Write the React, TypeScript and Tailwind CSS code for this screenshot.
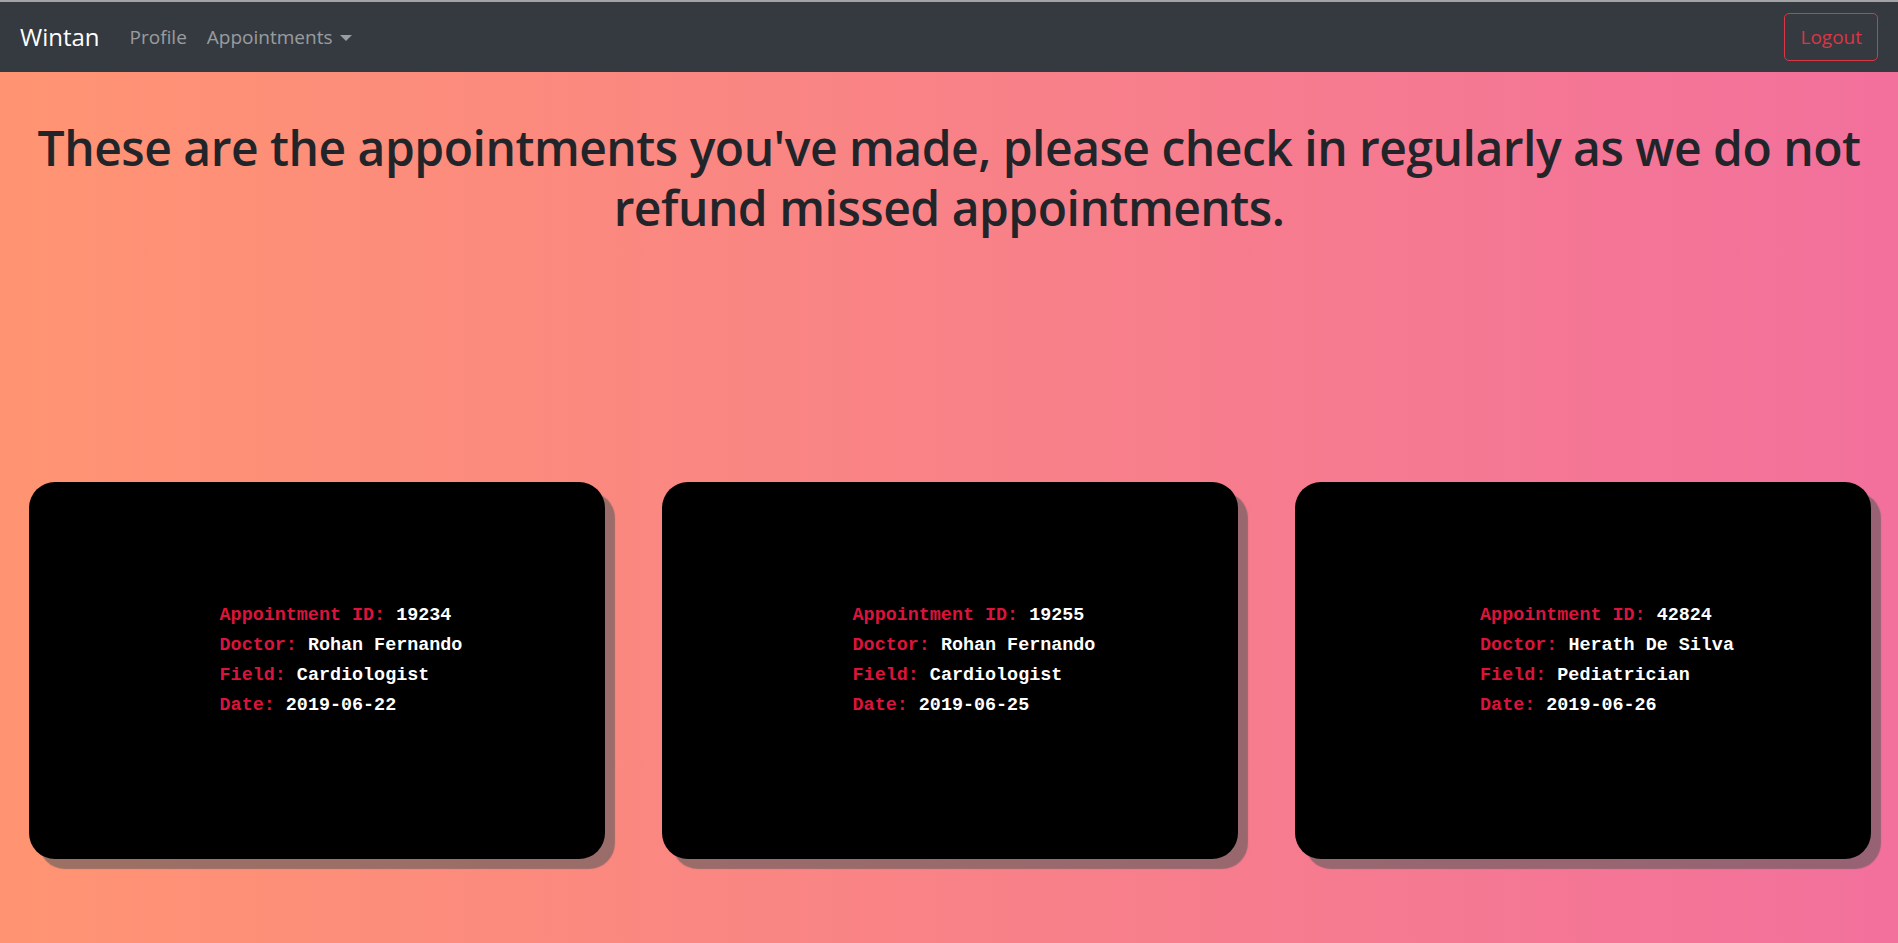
import * as React from 'react';

type Appointment = { id: string; doctor: string; field: string; date: string };

const appointments: Appointment[] = [
    { id: '19234', doctor: 'Rohan Fernando', field: 'Cardiologist', date: '2019-06-22' },
    { id: '19255', doctor: 'Rohan Fernando', field: 'Cardiologist', date: '2019-06-25' },
    { id: '42824', doctor: 'Herath De Silva', field: 'Pediatrician', date: '2019-06-26' },
];

const Navbar: React.FC = () => (
    <nav className="bg-[#343a40] border-t-2 border-[#a3a3a3]">
        <div className="h-[70px] flex items-center justify-between px-5">
            <div className="flex items-center">
                <a href="#" className="text-white text-[24px] leading-[30px] mr-[20px]">Wintan</a>
                <a href="#" className="text-white/50 text-[19px] leading-[30px] px-[10px]">Profile</a>
                <a href="#" className="text-white/50 text-[19px] leading-[30px] px-[10px] flex items-center">
                    Appointments
                    <span className="ml-[8px] mt-[2px] w-0 h-0 border-l-[6px] border-r-[6px] border-t-[6px] border-l-transparent border-r-transparent border-t-white/50" />
                </a>
            </div>
            <button className="border border-[#dc3545] text-[#dc3545] rounded-[5px] text-[19px] leading-[30px] px-[15px] py-[8px]">
                Logout
            </button>
        </div>
    </nav>
);

const AppointmentCard: React.FC<{ a: Appointment }> = ({ a }) => (
    <div className="h-[377px] bg-black rounded-[26px] shadow-[10px_10px_1px_rgba(90,90,90,0.6)] flex items-center justify-center pl-[48px] pb-[20px]">
        <div className="font-['Liberation_Mono',monospace] font-bold text-[18.4px] leading-[30px]">
            <div><span className="text-[#dc143c]">Appointment ID:</span> <span className="text-white">{a.id}</span></div>
            <div><span className="text-[#dc143c]">Doctor:</span> <span className="text-white">{a.doctor}</span></div>
            <div><span className="text-[#dc143c]">Field:</span> <span className="text-white">{a.field}</span></div>
            <div><span className="text-[#dc143c]">Date:</span> <span className="text-white">{a.date}</span></div>
        </div>
    </div>
);

export default function App() {
    return (
        <div className="min-h-screen font-['Open_Sans',sans-serif] bg-[linear-gradient(to_right,#ff9472,#f2709c)]">
            <Navbar />
            <main>
                <h1 className="text-center text-[#212529] text-[48px] leading-[60px] font-semibold pt-[46px] px-4 tracking-[-0.5px]">
                    These are the appointments you've made, please check in regularly as we do not refund missed appointments.
                </h1>
                <div className="grid grid-cols-3 gap-[57px] pl-[29px] pr-[27px] mt-[244px] pb-[74px]">
                    {appointments.map(a => (
                        <AppointmentCard key={a.id} a={a} />
                    ))}
                </div>
            </main>
        </div>
    );
}
